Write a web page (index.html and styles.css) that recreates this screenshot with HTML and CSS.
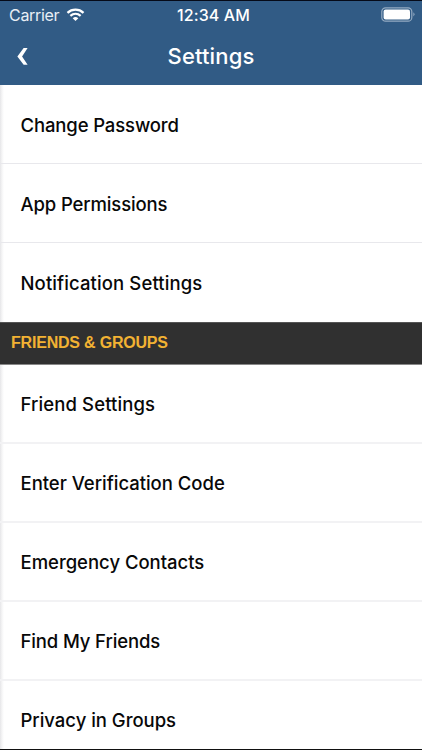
FILE: index.html
```html
<!DOCTYPE html>
<html lang="en">
<head>
<meta charset="utf-8">
<title>Settings</title>
<link rel="stylesheet" href="styles.css">
</head>
<body>
<div class="screen">
  <header class="header">
    <div class="status">
      <div class="carrier"><span>Carrier</span>
        <svg class="wifi" width="19" height="14" viewBox="0 0 20 15" fill="none" stroke="#fff">
          <path d="M1.4 5.1C6.3.7 13.7.7 18.6 5.1" stroke-width="2.5"/>
          <path d="M4.5 8.4C7.7 5.6 12.3 5.6 15.5 8.4" stroke-width="2.4"/>
          <path d="M7 10.9Q10 8.3 13 10.9L10 13.9Z" fill="#fff" stroke="none"/>
        </svg>
      </div>
      <time class="time">12:34 AM</time>
      <svg class="battery" width="34" height="15" viewBox="0 0 34 15">
        <rect x=".8" y=".8" width="30" height="13.4" rx="3.8" fill="none" stroke="#94abc2" stroke-width="1.2"/>
        <rect x="2.6" y="2.6" width="26.4" height="9.8" rx="2" fill="#fff"/>
        <path d="M32.4 5.2Q34.6 7.3 32.4 9.6Z" fill="#94abc2"/>
      </svg>
    </div>
    <nav class="nav">
      <svg class="back" width="12" height="19" viewBox="0 0 13 20"><path d="M7.2.8H11.5L5.5 10 11.5 19H7.2L.4 10Z" fill="#fff"/></svg>
      <h1 class="title">Settings</h1>
      <span></span>
    </nav>
  </header>
  <main class="list">
    <div class="row"><span class="label tight">Change Password</span></div>
    <div class="row"><span class="label tight">App Permissions</span></div>
    <div class="row last"><span class="label loose">Notification Settings</span></div>
    <h2 class="section">FRIENDS &amp; GROUPS</h2>
    <div class="row lower"><span class="label loose">Friend Settings</span></div>
    <div class="row lower"><span class="label">Enter Verification Code</span></div>
    <div class="row lower"><span class="label">Emergency Contacts</span></div>
    <div class="row lower"><span class="label tight">Find My Friends</span></div>
    <div class="row lower"><span class="label">Privacy in Groups</span></div>
  </main>
</div>
</body>
</html>
```
FILE: styles.css
```css
* { box-sizing: border-box; margin: 0; }
body { background: #fff; overflow: hidden; font-family: Inter, "Liberation Sans", sans-serif; }
.screen { width: 422px; height: 750px; overflow: hidden; display: flex; flex-direction: column; border-top: 1px solid #050a18; border-bottom: 1px solid #111; }
.header { flex: none; height: 84px; background: #315b85; color: #fff; }
.status { display: grid; grid-template-columns: 1fr auto 1fr; align-items: center; height: 27px; padding: 0 7px 0 9px; }
.carrier { display: flex; align-items: center; gap: 7px; font-size: 16px; letter-spacing: -.3px; color: #e8eff6; }
.time { padding-left: 3px; font-size: 16px; font-weight: 500; letter-spacing: .1px; }
.battery { justify-self: end; }
.nav { display: grid; grid-template-columns: 1fr auto 1fr; align-items: center; height: 56px; padding: 0 17px; }
.title { font-size: 22px; line-height: 28px; font-weight: 500; letter-spacing: .15px; }
.list { flex: 1; min-height: 0; overflow: hidden; background: linear-gradient(90deg, #e6e6e8 0, #f5f5f6 2px, #fff 4px); }
.row { height: 79px; display: flex; align-items: center; padding: 1px 20.5px 0; border-bottom: 1px solid #e8e8ec; }
.last { padding-top: 0; border-bottom: 0; }
.lower { padding-top: 0; border-bottom: 2px solid #f2f2f4; }
.label { font-size: 18.5px; line-height: 24px; font-weight: 550; letter-spacing: -.02px; color: #080808; white-space: nowrap; }
.tight { letter-spacing: -.13px; }
.loose { letter-spacing: .11px; }
.section { height: 43px; display: flex; align-items: center; padding: 0 11px 1px; background: #303030; border-top: 1px solid #555; border-bottom: 1px solid #888; color: #f2b233; font: bold 16px "Liberation Sans", Arial, sans-serif; letter-spacing: -.2px; }
```
